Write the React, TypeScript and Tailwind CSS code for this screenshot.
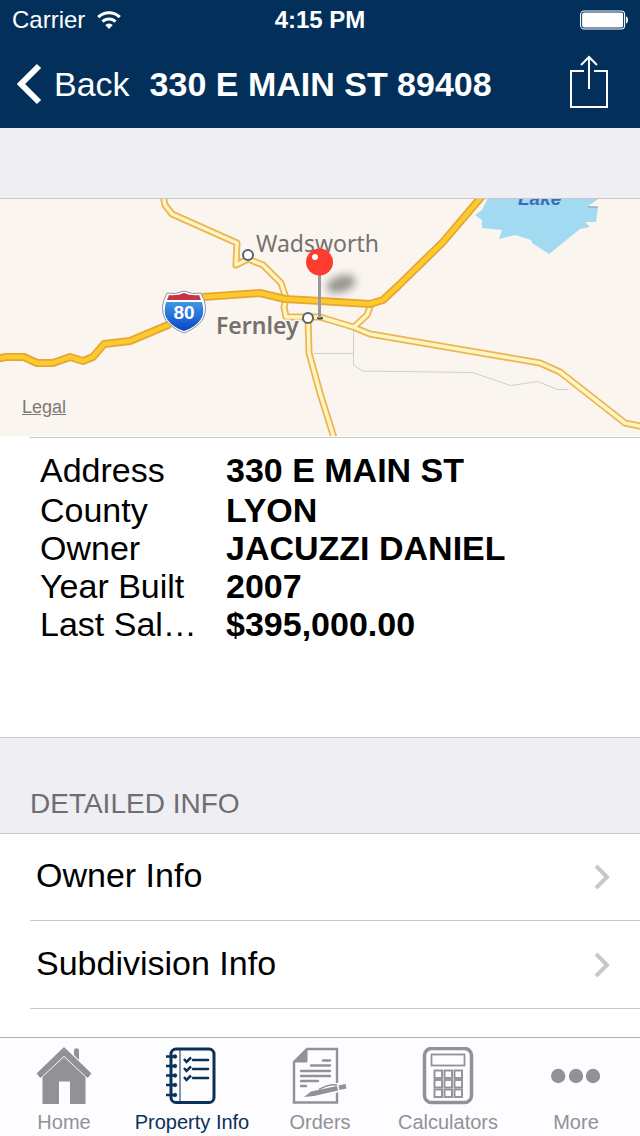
import type { ReactNode } from "react";

type TabItem = {
  label: string;
  icon: ReactNode;
  active?: boolean;
};

const details = [
  { label: "Address", value: "330 E MAIN ST" },
  { label: "County", value: "LYON" },
  { label: "Owner", value: "JACUZZI DANIEL" },
  { label: "Year Built", value: "2007" },
  { label: "Last Sal…", value: "$395,000.00" },
];

const links = ["Owner Info", "Subdivision Info"];

// two-lane roads, drawn twice (casing, then fill)
const minorRoads = [
  "M163 -4 L165 6 L172 15 L237 44 L236 66 L248 60 L263 66 L281 84 L286 99 L284 108 L286 118 L308 118",
  "M308 118 H320 L353 128 L370 135 L540 164 L560 173 L625 224 L644 228",
  "M354 128 L367 116 L371 105",
  "M308 118 L309 154 L320 194 L335 242",
];

const freeway =
  "M-4 160 L6 158 H24 L37 164 H53 L70 158 L83 162 L93 158 L104 145 L130 142 L168 126 L188 105 L203 98 L260 94 L285 100 L320 102 L370 105 L383 101 L398 87 L443 43 L483 -4";

const HomeIcon = () => (
  <svg viewBox="0 0 56 58" className="h-[58px] w-14" fill="#929195">
    <path d="M38 3.5c0-3 5-3 5 0V13l-5-5z" />
    <path d="M28 1 1.5 26.5l3 3.5L28 8l23.500 22 3-3.500z" stroke="#929195" strokeWidth="1.500" strokeLinejoin="round" />
    <path d="M28 10 6.500 30v27H23V34.500h11V57h15.500V30z" />
  </svg>
);

const NotebookIcon = () => (
  <svg viewBox="0 0 50 58" className="h-[58px] w-[50px] overflow-visible" fill="none" stroke="#0b3157">
    <rect x="4" y="2" width="43" height="53.500" rx="5" strokeWidth="3" />
    <path d="M13 2v53" strokeWidth="1" />
    {[9.500, 19, 28.500, 38, 48].map(y => (
      <g key={y}>
        <path d={`M-1 ${y}h9`} strokeWidth="2.500" />
        <circle cx="8" cy={y} r="1.800" fill="#0b3157" strokeWidth="0.800" />
      </g>
    ))}
    {[13, 22, 31].map(y => (
      <g key={y}>
        <path d={`M17 ${y - 1}l2.500 3 4.500-4.500`} strokeWidth="2.500" />
        <path d={`M26 ${y}h15`} strokeWidth="2.500" strokeLinecap="round" />
      </g>
    ))}
  </svg>
);

const OrdersIcon = () => (
  <svg viewBox="0 0 56 58" className="h-[58px] w-14" fill="none" stroke="#929195">
    <path d="M15 2h30v53.500H2V15z" strokeWidth="2.400" />
    <path d="M15 2v13H2z" fill="#929195" strokeWidth="1" />
    <g strokeWidth="2.400" strokeLinecap="round">
      <path d="M31 13.500h7" />
      <path d="M19 18.500h19" />
      <path d="M9 24h29" />
      <path d="M9 29h29" />
      <path d="M9 34h17" />
      <path d="M9 39h5" />
    </g>
    <path d="M12 50 19 44 30 40q8-4 15-3l9 0 1 4-10 3.500-23 5z" fill="#fdfcfe" stroke="#fdfcfe" strokeWidth="2" />
    <path d="M12 50 19 44.500 45 39 46 43.500 22 49z" fill="#929195" stroke="none" />
    <path d="M27 42.500c6-3.500 12-5.500 18-4.500" strokeWidth="1.600" />
    <path d="m47 40.800 7-1.600" strokeWidth="4.500" />
  </svg>
);

const CalculatorIcon = () => (
  <svg viewBox="0 0 52 58" className="h-[58px] w-[52px]" fill="none" stroke="#929195">
    <rect x="2.500" y="1.500" width="47" height="54" rx="7" strokeWidth="3.500" />
    <rect x="9.500" y="7.500" width="33" height="11" strokeWidth="1.800" />
    {[23.500, 33, 42.500].map(y =>
      [12.500, 22.500, 32.500].map(x => (
        <rect key={`${x}-${y}`} x={x} y={y} width="7.500" height="7.500" strokeWidth="1.900" />
      ))
    )}
  </svg>
);

const MoreIcon = () => (
  <svg viewBox="0 0 50 58" className="h-[58px] w-[50px]" fill="#929195">
    <circle cx="7.200" cy="29" r="7.200" />
    <circle cx="25" cy="29" r="7.200" />
    <circle cx="42" cy="29" r="7.200" />
  </svg>
);

const tabs: TabItem[] = [
  { label: "Home", icon: <HomeIcon /> },
  { label: "Property Info", icon: <NotebookIcon />, active: true },
  { label: "Orders", icon: <OrdersIcon /> },
  { label: "Calculators", icon: <CalculatorIcon /> },
  { label: "More", icon: <MoreIcon /> },
];

function StatusBar() {
  return (
    <div className="grid h-10 grid-cols-3 items-center px-3 text-2xl">
      <div className="flex items-center gap-3">
        <span>Carrier</span>
        <svg viewBox="0 0 24 18" className="h-[18px] w-6" fill="none" stroke="#fff" strokeWidth="3">
          <path d="M1.200 6.200a15.500 15.500 0 0 1 21.600 0" />
          <path d="M5.500 10.600a9.200 9.200 0 0 1 13 0" />
          <path d="m12 18-3.800-4a5.400 5.400 0 0 1 7.600 0z" fill="#fff" stroke="none" />
        </svg>
      </div>
      <span className="text-center font-bold">4:15 PM</span>
      <svg viewBox="0 0 48 20" className="h-5 w-12 justify-self-end" fill="none">
        <rect x="0.600" y="1" width="44" height="18" rx="3.500" stroke="#fff" strokeWidth="1.100" />
        <rect x="2.100" y="2.500" width="41" height="15" rx="2" fill="#fff" />
        <path d="M46 6.500c2.700.5 2.700 6.500 0 7z" fill="#fff" />
      </svg>
    </div>
  );
}

function NavBar() {
  return (
    <div className="flex h-[88px] items-center pl-4 pr-8">
      <button type="button" className="flex items-center gap-3 text-[34px]">
        <svg viewBox="0 0 26 42" className="h-[42px] w-[26px]" fill="none" stroke="#fff" strokeWidth="6">
          <path d="M23 3 5 21l18 18" />
        </svg>
        Back
      </button>
      <h1 className="ml-5 flex-1 whitespace-nowrap text-[34px] font-bold">330 E MAIN ST 89408</h1>
      <button type="button" aria-label="Share">
        <svg viewBox="0 0 38 58" className="h-[58px] w-[38px]" fill="none" stroke="#fff" strokeWidth="2">
          <path d="M14 16H1v36h36V16H24" />
          <path d="M19 34V2" />
          <path d="m11 10 8-8 8 8" />
        </svg>
      </button>
    </div>
  );
}

function PropertyMap() {
  return (
    <div className="relative border-t border-[#c8c7cc] bg-[#faf5ee]">
      <svg viewBox="0 0 640 237" preserveAspectRatio="xMidYMid slice" className="block h-[237px] w-full" fill="none">
        <defs>
          <linearGradient id="shield" x1="0" y1="0" x2="0" y2="1">
            <stop offset="0" stopColor="#3f97e6" />
            <stop offset="1" stopColor="#0a45c4" />
          </linearGradient>
          <filter id="soft" x="-50%" y="-100%" width="200%" height="300%">
            <feGaussianBlur stdDeviation="4" />
          </filter>
        </defs>

        <path
          d="M488 -1 482 11 475 16 482 21V29L502 31 499 40 515 36 531 41 532 44 549 55 580 30 590 28 585 23H596L598 8 588 7 600 -1z"
          fill="#a2daf2"
        />
        <path d="M588 8h10" stroke="#8b9aa5" />
        <text x="518" y="6" fontSize="19" fontStyle="italic" className="font-bold" fill="#3b6db5">Lake</text>

        <g stroke="#d2cec9">
          <path d="M314 154.500h39" />
          <path d="M353.500 131v35l9 6 110 1.500 38 13 27-4 20 8h10" />
        </g>

        <g strokeLinejoin="round">
          {minorRoads.map(d => <path key={d} d={d} stroke="#ecb552" strokeWidth="7" />)}
          {minorRoads.map(d => <path key={d} d={d} stroke="#fdf5c4" strokeWidth="3.500" />)}
          <path d={freeway} stroke="#e7a437" strokeWidth="8" />
          <path d={freeway} stroke="#fccb2b" strokeWidth="4.500" />
        </g>

        <g fill="#fff" stroke="#59616b" strokeWidth="2">
          <circle cx="248" cy="56" r="5" />
          <circle cx="308" cy="119" r="5" />
        </g>
        <g fontSize="23" fill="#75716e" stroke="#faf5ee" strokeWidth="3" paintOrder="stroke" className="font-['Noto_Sans',sans-serif]">
          <text x="256" y="53">Wadsworth</text>
          <text x="216" y="135" className="font-semibold">Fernley</text>
        </g>

        <path d="M167 94q8 2 17-2 9 4 17 2 8 14 2 26-6 9-19 14-13-5-19-14-6-12 2-26z" fill="#fff" stroke="#8c959e" />
        <path d="M166 103h36q3 11-1 17-5 8-17 12-12-4-17-12-4-6-1-17z" fill="url(#shield)" />
        <path d="M169 96q8 1 15-2 7 3 15 2l2 5h-34z" fill="#c8324a" />
        <text x="184" y="120" textAnchor="middle" fontSize="19" className="font-bold" fill="#fff">80</text>

        <ellipse cx="341" cy="85" rx="15" ry="8" fill="#000" opacity="0.400" filter="url(#soft)" transform="rotate(-18 341 85)" />
        <ellipse cx="320" cy="119" rx="3" ry="1.500" fill="#444" />
        <path d="M319.500 74v45" stroke="#97999e" strokeWidth="3" />
        <circle cx="319.500" cy="63" r="13.500" fill="#fd3b2f" />
        <circle cx="315" cy="58" r="3" fill="#fff" />
      </svg>
      <a href="#legal" className="absolute bottom-[15px] left-[22px] text-lg text-[#7d7975] underline">Legal</a>
    </div>
  );
}

function TabBar() {
  return (
    <nav className="sticky bottom-0 grid grid-cols-5 border-t border-[#b2b1b5] bg-[#fdfcfe] pb-px pt-[9px]">
      {tabs.map(tab => (
        <a
          key={tab.label}
          href="#"
          aria-current={tab.active ? "page" : undefined}
          className={`flex flex-col items-center gap-1 whitespace-nowrap text-[20px] leading-[26px] ${tab.active ? "text-[#0b3157]" : "text-[#929195]"}`}
        >
          {tab.icon}
          {tab.label}
        </a>
      ))}
    </nav>
  );
}

export default function App() {
  return (
    <div className="flex min-h-screen flex-col bg-white font-['Liberation_Sans',Arial,sans-serif] text-black">
      <header className="bg-[#02305a] text-white">
        <StatusBar />
        <NavBar />
      </header>

      <main className="flex-1">
        <div className="h-[70px] bg-[#efeef3]" />
        <PropertyMap />

        <section className="border-b border-[#c8c7cc] pt-px">
          <div className="ml-[30px] border-t border-[#c8c7cc]" />
          <dl className="px-10 pb-[94px] pt-[13px] text-[34px] leading-[38px]">
            {details.map(item => (
              <div key={item.label} className="flex first:pb-0.5">
                <dt className="w-[186px] shrink-0">{item.label}</dt>
                <dd className="font-bold">{item.value}</dd>
              </div>
            ))}
          </dl>
        </section>

        <h2 className="bg-[#efeef3] pb-[13px] pl-[30px] pt-[50px] text-[28px] leading-8 text-[#6d6d72]">
          DETAILED INFO
        </h2>

        <ul className="border-t border-[#c8c7cc]">
          {links.map(label => (
            <li key={label} className="pl-[30px] first:-mt-px">
              <a href="#" className="flex h-[88px] items-center justify-between border-b border-[#c8c7cc] pl-1.5 pr-[30px] text-[34px]">
                <span className="pb-0.5">{label}</span>
                <svg viewBox="0 0 16 26" className="h-[26px] w-4" fill="none" stroke="#c7c7cc" strokeWidth="4">
                  <path d="m2 2 11 11L2 24" />
                </svg>
              </a>
            </li>
          ))}
        </ul>
      </main>

      <TabBar />
    </div>
  );
}
